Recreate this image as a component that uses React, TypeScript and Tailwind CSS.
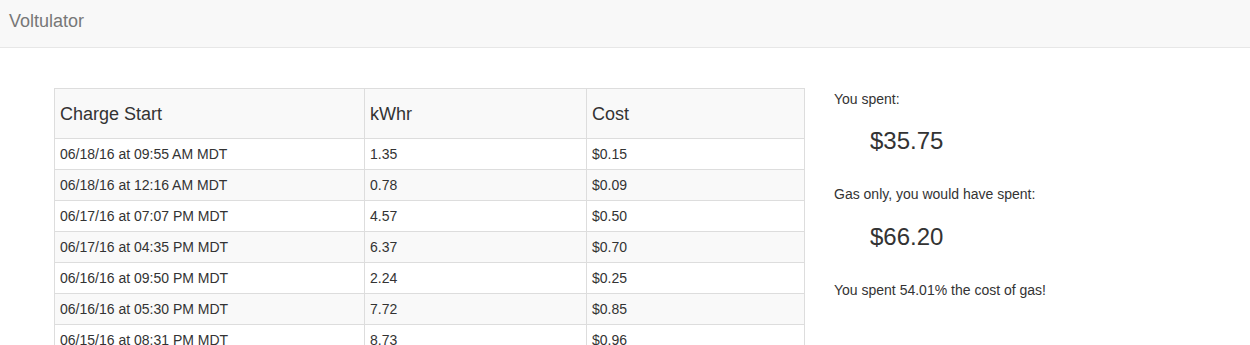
const charges = [
  { start: "06/18/16 at 09:55 AM MDT", kwhr: "1.35", cost: "$0.15" },
  { start: "06/18/16 at 12:16 AM MDT", kwhr: "0.78", cost: "$0.09" },
  { start: "06/17/16 at 07:07 PM MDT", kwhr: "4.57", cost: "$0.50" },
  { start: "06/17/16 at 04:35 PM MDT", kwhr: "6.37", cost: "$0.70" },
  { start: "06/16/16 at 09:50 PM MDT", kwhr: "2.24", cost: "$0.25" },
  { start: "06/16/16 at 05:30 PM MDT", kwhr: "7.72", cost: "$0.85" },
  { start: "06/15/16 at 08:31 PM MDT", kwhr: "8.73", cost: "$0.96" },
  { start: "06/15/16 at 07:12 AM MDT", kwhr: "3.10", cost: "$0.34" },
];

const App = () => {
  return (
    <div className="min-h-screen bg-white text-[#333] font-['Liberation_Sans',Arial,sans-serif] text-[14px]">
      <nav className="h-[48px] bg-[#f8f8f8] border-b border-[#e7e7e7] pl-[9px] pt-[11px]">
        <span className="text-[18px] leading-[20px] text-[#777]">Voltulator</span>
      </nav>

      <main className="flex pl-[54px] pt-[40px]">
        <table className="table-fixed border-collapse border border-[#ddd] w-[750px]">
          <colgroup>
            <col className="w-[310px]" />
            <col className="w-[222px]" />
            <col className="w-[218px]" />
          </colgroup>
          <tbody>
            <tr className="bg-[#f9f9f9]">
              <th className="border border-[#ddd] h-[50px] px-[5px] text-left font-normal text-[18px] leading-[20px]">
                Charge Start
              </th>
              <th className="border border-[#ddd] px-[5px] text-left font-normal text-[18px] leading-[20px]">
                kWhr
              </th>
              <th className="border border-[#ddd] px-[5px] text-left font-normal text-[18px] leading-[20px]">
                Cost
              </th>
            </tr>
            {charges.map((c, i) => (
              <tr key={c.start} className={i % 2 === 1 ? "bg-[#f9f9f9]" : "bg-white"}>
                <td className="border border-[#ddd] px-[5px] py-[5px] leading-[20px]">{c.start}</td>
                <td className="border border-[#ddd] px-[5px] py-[5px] leading-[20px]">{c.kwhr}</td>
                <td className="border border-[#ddd] px-[5px] py-[5px] leading-[20px]">{c.cost}</td>
              </tr>
            ))}
          </tbody>
        </table>

        <div className="ml-[29px] flex flex-col">
          <p className="leading-[20px] pt-[1px]">You spent:</p>
          <div className="mt-[19px] pl-[36px] text-[24px] leading-[26px]">$35.75</div>
          <p className="mt-[30px] leading-[20px]">Gas only, you would have spent:</p>
          <div className="mt-[20px] pl-[36px] text-[24px] leading-[26px]">$66.20</div>
          <p className="mt-[30px] leading-[20px]">You spent 54.01% the cost of gas!</p>
        </div>
      </main>
    </div>
  );
};

export default App;
